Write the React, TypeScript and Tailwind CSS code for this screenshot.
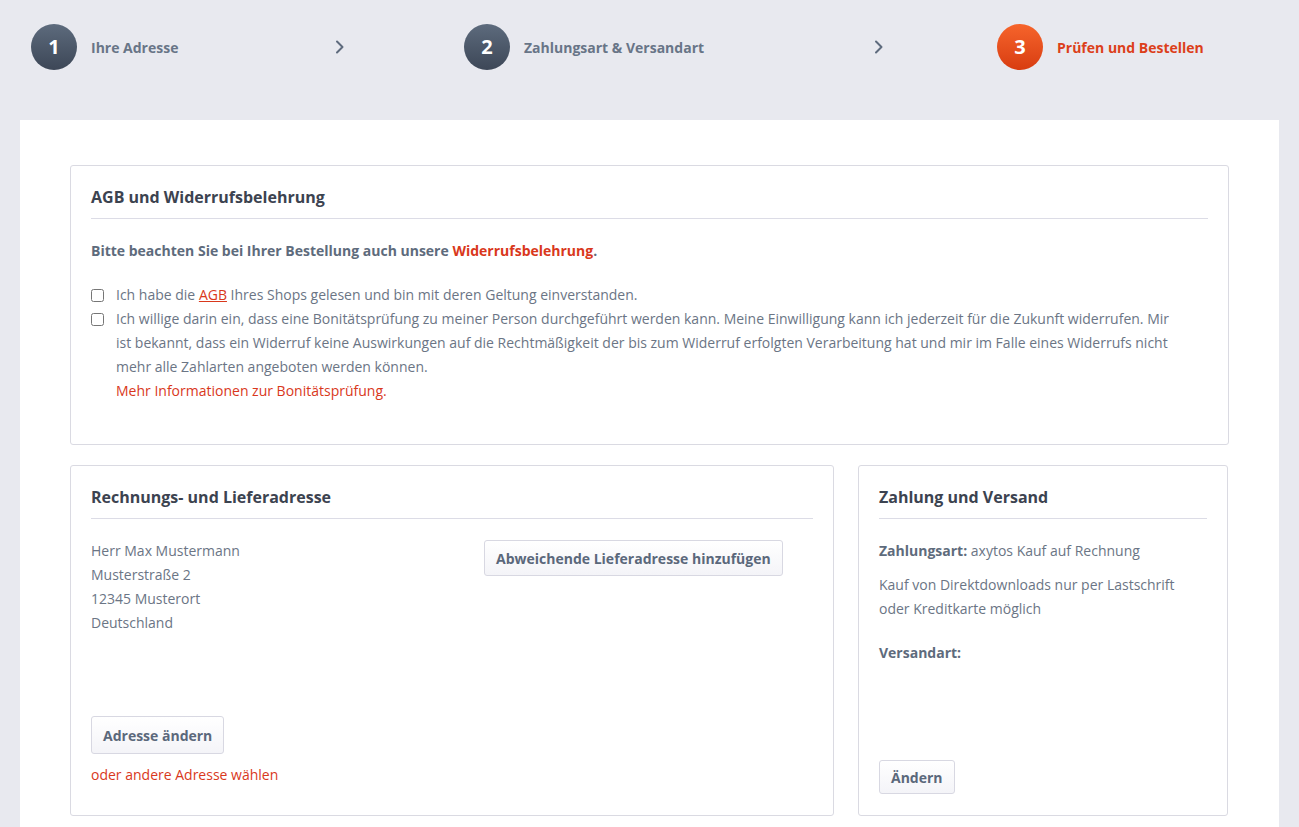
import React from "react";

const font = { fontFamily: '"Open Sans", "Liberation Sans", sans-serif' };

function Chevron() {
  return (
    <svg width="16" height="16" viewBox="0 0 16 16" className="shrink-0">
      <path d="M5 2.5 L10.5 8 L5 13.5" fill="none" stroke="#5e6b7d" strokeWidth="2" strokeLinecap="round" strokeLinejoin="round" />
    </svg>
  );
}

function Step({ n, label, active, width }: { n: number; label: string; active?: boolean; width: string }) {
  return (
    <div className={`flex items-center gap-[14px] ${width}`}>
      <div
        className={`w-[46px] h-[46px] rounded-full flex items-center justify-center text-white text-[20px] font-bold ${
          active ? "bg-gradient-to-b from-[#f6642b] to-[#d83c10]" : "bg-gradient-to-b from-[#5d6b7d] to-[#3d4757]"
        }`}
      >
        {n}
      </div>
      <span className={`text-[14px] font-bold ${active ? "text-[#dc3f1a]" : "text-[#687587]"}`}>{label}</span>
    </div>
  );
}

function PanelHeader({ title }: { title: string }) {
  return (
    <div className="pt-[19px] pb-[9px] border-b border-[#dcdce6]">
      <h2 className="text-[16px] leading-[24px] font-bold text-[#3c4350]">{title}</h2>
    </div>
  );
}

function Button({ children, className = "" }: { children: React.ReactNode; className?: string }) {
  return (
    <button
      className={`border border-[#d8d8e2] rounded-[3px] bg-gradient-to-b from-white to-[#f4f4f8] text-[14px] font-bold text-[#5b687b] px-[11px] ${className}`}
    >
      {children}
    </button>
  );
}

export default function App() {
  return (
    <div className="min-h-screen bg-[#e8e9ef]" style={font}>
      <div className="flex items-center pl-[31px] pt-[24px]">
        <Step n={1} label="Ihre Adresse" width="w-[301px]" />
        <Chevron />
        <div className="ml-[116px]">
          <Step n={2} label="Zahlungsart & Versandart" width="w-[407px]" />
        </div>
        <Chevron />
        <div className="ml-[110px]">
          <Step n={3} label="Prüfen und Bestellen" active width="w-[260px]" />
        </div>
      </div>

      <div className="mx-[20px] mt-[50px] bg-white px-[50px] pt-[45px] pb-[40px]">
        <section className="border border-[#dadae2] rounded-[3px] px-[20px] pb-[41px]">
          <PanelHeader title="AGB und Widerrufsbelehrung" />
          <p className="mt-[20px] text-[14px] leading-[24px] font-bold text-[#5e6b7c]">
            Bitte beachten Sie bei Ihrer Bestellung auch unsere{" "}
            <a className="text-[#d9381c]">Widerrufsbelehrung</a>.
          </p>
          <div className="mt-[20px] text-[14px] leading-[24px] text-[#6b7585]">
            <label className="flex items-start gap-[12px]">
              <input type="checkbox" className="mt-[6px] w-[13px] h-[13px] shrink-0" />
              <span>
                Ich habe die <a className="text-[#d9381c] underline">AGB</a> Ihres Shops gelesen und bin mit deren Geltung
                einverstanden.
              </span>
            </label>
            <label className="flex items-start gap-[12px]">
              <input type="checkbox" className="mt-[6px] w-[13px] h-[13px] shrink-0" />
              <span className="pr-[25px]">
                Ich willige darin ein, dass eine Bonitätsprüfung zu meiner Person durchgeführt werden kann. Meine
                Einwilligung kann ich jederzeit für die Zukunft widerrufen. Mir ist bekannt, dass ein Widerruf keine
                Auswirkungen auf die Rechtmäßigkeit der bis zum Widerruf erfolgten Verarbeitung hat und mir im Falle eines
                Widerrufs nicht mehr alle Zahlarten angeboten werden können.
                <br />
                <a className="text-[#d9381c]">Mehr Informationen zur Bonitätsprüfung.</a>
              </span>
            </label>
          </div>
        </section>

        <div className="flex gap-[24px] mt-[20px]">
          <section className="w-[764px] h-[351px] border border-[#dadae2] rounded-[3px] px-[20px] pb-[28px] flex flex-col">
            <PanelHeader title="Rechnungs- und Lieferadresse" />
            <div className="flex mt-[20px]">
              <div className="w-[393px] text-[14px] leading-[24px] text-[#6b7585]">
                <div>Herr Max Mustermann</div>
                <div>Musterstraße 2</div>
                <div>12345 Musterort</div>
                <div>Deutschland</div>
              </div>
              <div className="pt-[1px]">
                <Button className="h-[36px]">Abweichende Lieferadresse hinzufügen</Button>
              </div>
            </div>
            <div className="mt-auto">
              <Button className="h-[38px]">Adresse ändern</Button>
              <div className="mt-[9px] text-[14px] leading-[24px] text-[#d9381c]">oder andere Adresse wählen</div>
            </div>
          </section>

          <section className="w-[370px] h-[351px] border border-[#dadae2] rounded-[3px] px-[20px] pb-[21px] flex flex-col">
            <PanelHeader title="Zahlung und Versand" />
            <div className="mt-[20px] text-[14px] leading-[24px] text-[#6b7585]">
              <p>
                <span className="font-bold text-[#5e6b7c]">Zahlungsart:</span> axytos Kauf auf Rechnung
              </p>
              <p className="mt-[10px] pr-[20px]">Kauf von Direktdownloads nur per Lastschrift oder Kreditkarte möglich</p>
              <p className="mt-[20px] font-bold text-[#5e6b7c]">Versandart:</p>
            </div>
            <div className="mt-auto">
              <Button className="h-[34px]">Ändern</Button>
            </div>
          </section>
        </div>
      </div>
    </div>
  );
}
